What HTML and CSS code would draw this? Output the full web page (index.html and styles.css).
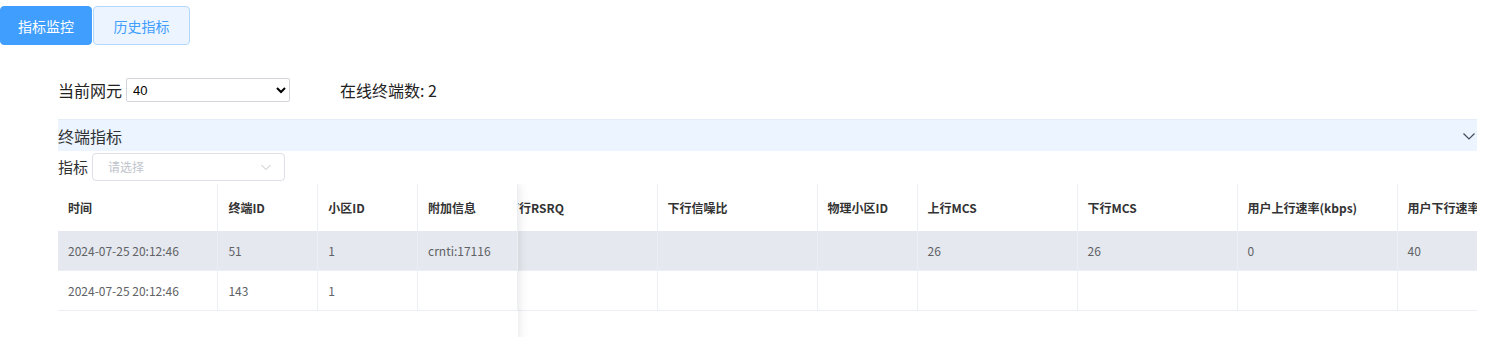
FILE: index.html
```html
<!DOCTYPE html>
<html lang="zh-CN">

<head>
    <meta charset="UTF-8">
    <meta name="viewport" content="width=device-width, initial-scale=1.0">
    <title>指标监控</title>
    <link rel="stylesheet" href="styles.css">
</head>

<body>
    <div class="tabs">
        <button type="button" class="tab active">指标监控</button>
        <button type="button" class="tab">历史指标</button>
    </div>

    <div class="content">
        <div class="toolbar">
            <label for="ne" class="ne-label">当前网元</label>
            <select id="ne" class="ne-select">
                <option value="40">40</option>
            </select>
            <span class="online">在线终端数: 2</span>
        </div>

        <div class="collapse-head">
            <span>终端指标</span>
            <svg class="arrow" width="14" height="14" viewBox="0 0 14 14">
                <path d="M1.5 4.5 L7 10 L12.5 4.5" fill="none" stroke="#404a5a" stroke-width="1.2" />
            </svg>
        </div>

        <div class="filter">
            <span class="filter-label">指标</span>
            <div class="fake-select">
                <span class="placeholder">请选择</span>
                <svg width="12" height="12" viewBox="0 0 12 12">
                    <path d="M1.5 4 L6 8.5 L10.5 4" fill="none" stroke="#c0c4cc" stroke-width="1" />
                </svg>
            </div>
        </div>

        <div class="grid">
            <div class="fixed">
                <table>
                    <colgroup>
                        <col style="width:160px">
                        <col style="width:100px">
                        <col style="width:100px">
                        <col style="width:100px">
                    </colgroup>
                    <thead>
                        <tr>
                            <th>时间</th>
                            <th>终端ID</th>
                            <th>小区ID</th>
                            <th>附加信息</th>
                        </tr>
                    </thead>
                    <tbody>
                        <tr class="hover">
                            <td>2024-07-25 20:12:46</td>
                            <td>51</td>
                            <td>1</td>
                            <td>crnti:17116</td>
                        </tr>
                        <tr>
                            <td>2024-07-25 20:12:46</td>
                            <td>143</td>
                            <td>1</td>
                            <td></td>
                        </tr>
                    </tbody>
                </table>
            </div>
            <div class="scroll">
                <table class="moved">
                    <colgroup>
                        <col style="width:160px">
                        <col style="width:160px">
                        <col style="width:100px">
                        <col style="width:160px">
                        <col style="width:160px">
                        <col style="width:160px">
                        <col style="width:160px">
                    </colgroup>
                    <thead>
                        <tr>
                            <th>下行RSRQ</th>
                            <th>下行信噪比</th>
                            <th>物理小区ID</th>
                            <th>上行MCS</th>
                            <th>下行MCS</th>
                            <th>用户上行速率(kbps)</th>
                            <th>用户下行速率(kbps)</th>
                        </tr>
                    </thead>
                    <tbody>
                        <tr class="hover">
                            <td></td>
                            <td></td>
                            <td></td>
                            <td>26</td>
                            <td>26</td>
                            <td>0</td>
                            <td>40</td>
                        </tr>
                        <tr>
                            <td></td>
                            <td></td>
                            <td></td>
                            <td></td>
                            <td></td>
                            <td></td>
                            <td></td>
                        </tr>
                    </tbody>
                </table>
            </div>
        </div>
    </div>
</body>

</html>
```

FILE: styles.css
```css
body {
    margin: 0;
    font-family: "Noto Sans CJK SC", "Noto Sans", sans-serif;
    color: #303133;
    background: #fff;
}

.tabs {
    display: flex;
    gap: 1px;
    padding-top: 6px;
}

.tab {
    height: 39px;
    font-family: inherit;
    font-size: 14px;
    border: 1px solid #b3d8ff;
    border-radius: 4px;
    background: #ecf5ff;
    color: #409eff;
    cursor: pointer;
    width: 97px;
    padding: 0;
}

.tab.active {
    width: 92px;
    background: #409eff;
    border-color: #409eff;
    color: #fff;
}

.content {
    padding: 0 8px 0 58px;
}

.toolbar {
    display: flex;
    align-items: center;
    height: 24px;
    margin-top: 33px;
}

.ne-label {
    font-size: 16px;
    color: #222;
    margin-right: 4px;
}

.ne-select {
    width: 164px;
    height: 24px;
    font-family: "Liberation Sans", Arial, sans-serif;
    font-size: 13px;
    color: #000;
    border: 1px solid #d4d4dc;
    border-radius: 2px;
    background: #fff;
    padding: 0 2px;
}

.online {
    margin-left: 50px;
    font-size: 16px;
    color: #222;
}

.collapse-head {
    display: flex;
    align-items: center;
    justify-content: space-between;
    height: 31px;
    margin-top: 17px;
    background: #ecf5ff;
    border-top: 1px solid #e4ecf7;
    font-size: 16px;
    color: #303133;
}

.arrow {
    margin-right: 1px;
}

.filter {
    display: flex;
    align-items: center;
    margin-top: 2px;
    height: 27px;
}

.filter-label {
    font-size: 15px;
    margin-right: 4px;
}

.fake-select {
    box-sizing: border-box;
    width: 193px;
    height: 28px;
    border: 1px solid #dcdfe6;
    border-radius: 4px;
    display: flex;
    align-items: center;
    justify-content: space-between;
    padding: 0 12px 0 15px;
}

.placeholder {
    font-size: 12px;
    color: #c0c4cc;
}

.grid {
    display: flex;
    margin-top: 4px;
}

/* fixed left columns, shadow only to the right */
.fixed {
    width: 460px;
    height: 160px;
    flex-shrink: 0;
    background: #fff;
    box-shadow: 0 0 10px rgba(0, 0, 0, 0.12);
    clip-path: inset(0 -14px 0 0);
    position: relative;
    z-index: 1;
}

.scroll {
    flex: 1;
    overflow: hidden;
}

table {
    border-collapse: collapse;
    table-layout: fixed;
    font-size: 12px;
}

.moved {
    margin-left: -21px;
    width: 1060px;
}

th,
td {
    text-align: left;
    padding: 0 10px;
    border-right: 1px solid #ebeef5;
    border-bottom: 1px solid #ebeef5;
    white-space: nowrap;
    overflow: hidden;
}

th {
    height: 47px;
    font-weight: bold;
    color: #333;
    border-bottom: none;
}

td {
    height: 39px;
    color: #606266;
}

tr.hover td {
    background: #e5e8ee;
}
```
